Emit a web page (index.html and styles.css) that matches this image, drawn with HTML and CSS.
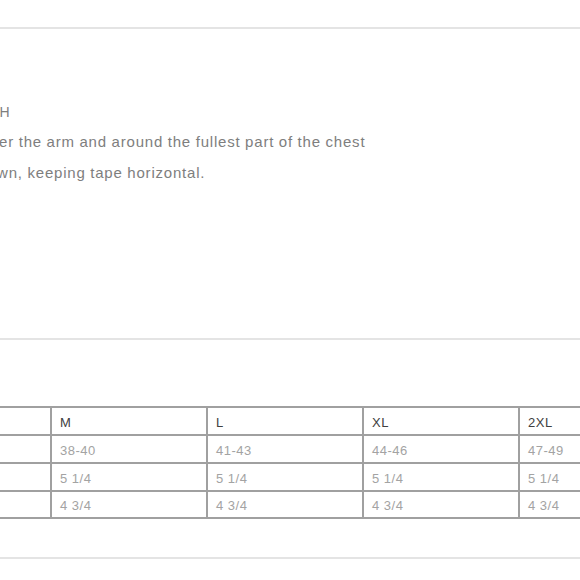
FILE: index.html
```html
<!DOCTYPE html>
<html lang="en">
<head>
<meta charset="utf-8">
<title>Size Guide</title>
<link rel="stylesheet" href="styles.css">
</head>
<body>
<div class="page">
  <div class="top-bar"></div>
  <section class="measure">
    <div class="copy">
      <h3 class="copy-title">CHEST WIDTH</h3>
      <p class="copy-text">Measure under the arm and around the fullest part of the chest<br>with arms down, keeping tape horizontal.</p>
    </div>
  </section>
  <section class="chart">
    <table class="size-table">
      <thead>
        <tr><th>Size</th><th>M</th><th>L</th><th>XL</th><th>2XL</th></tr>
      </thead>
      <tbody>
        <tr><td>Chest</td><td>38-40</td><td>41-43</td><td>44-46</td><td>47-49</td></tr>
        <tr><td>Sleeve</td><td>5 1/4</td><td>5 1/4</td><td>5 1/4</td><td>5 1/4</td></tr>
        <tr class="last-row"><td>Hem</td><td>4 3/4</td><td>4 3/4</td><td>4 3/4</td><td>4 3/4</td></tr>
      </tbody>
    </table>
  </section>
</div>
</body>
</html>
```
FILE: styles.css
```css
html, body {
  margin: 0;
  padding: 0;
  overflow: hidden;
  background: #ffffff;
}
body {
  font-family: "Liberation Sans", Arial, sans-serif;
  width: 580px;
  height: 580px;
}
.page {
  width: 580px;
  overflow: hidden;
}
.top-bar {
  height: 27px;
  border-bottom: 2px solid #e4e4e4;
}
.measure {
  height: 311px;
  box-sizing: border-box;
  padding-top: 69px;
  border-bottom: 2px solid #e4e4e4;
}
.copy {
  margin-left: -97px;
  color: #7e7e7e;
  font-size: 15px;
  letter-spacing: 0.8px;
  word-spacing: -0.3px;
  white-space: nowrap;
}
.copy-title {
  margin: 0;
  font-weight: normal;
  font-size: 14px;
  letter-spacing: 1px;
  line-height: 28px;
}
.copy-text {
  margin: 0;
  line-height: 31px;
}
.chart {
  height: 219px;
  box-sizing: border-box;
  padding-top: 66px;
  border-bottom: 2px solid #e4e4e4;
  overflow: hidden;
}
.size-table {
  border-collapse: collapse;
  table-layout: fixed;
  width: 782px;
  margin-left: -106px;
  font-size: 13px;
  letter-spacing: 0.5px;
}
.size-table th,
.size-table td {
  border: 2px solid #a0a0a0;
  height: 28px;
  padding: 2px 8px 0;
  box-sizing: border-box;
  text-align: left;
  font-weight: normal;
  white-space: nowrap;
}
.size-table .last-row td {
  height: 27px;
}
.size-table th {
  color: #404040;
}
.size-table td {
  color: #a3a3a3;
}
```
